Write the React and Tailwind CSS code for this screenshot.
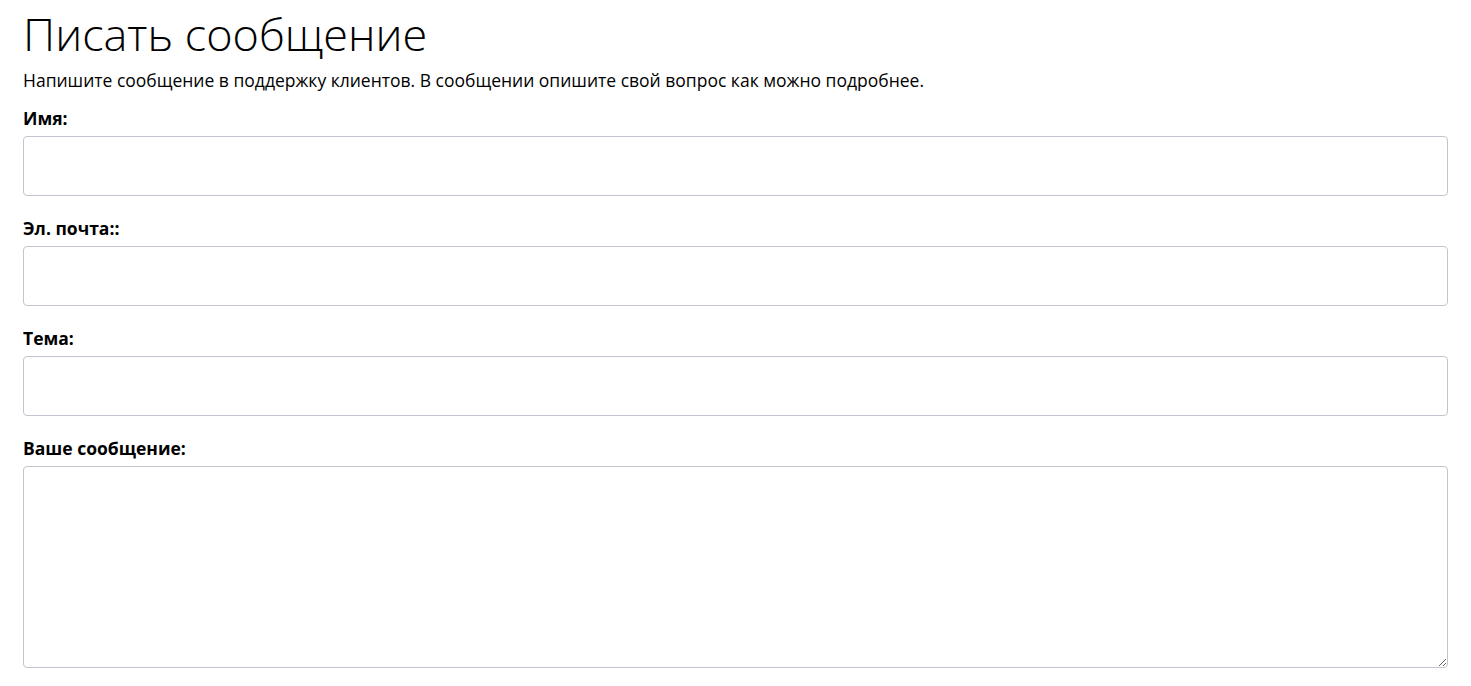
export default function App() {
  const fields = [
    { label: 'Имя:', type: 'text' },
    { label: 'Эл. почта::', type: 'email' },
    { label: 'Тема:', type: 'text' },
  ];

  return (
    <div
      className="min-h-screen bg-white px-[23px] pt-[6px] text-black"
      style={{ fontFamily: '"Open Sans", "Liberation Sans", sans-serif' }}
    >
      <h1 className="text-[45px] font-light leading-[56px]">Писать сообщение</h1>
      <p className="mt-[6px] text-[17.5px] leading-6">
        Напишите сообщение в поддержку клиентов. В сообщении опишите свой вопрос как можно подробнее.
      </p>
      <form className="mt-[14px] flex flex-col gap-5">
        {fields.map((f) => (
          <div key={f.label} className="flex flex-col gap-[6px]">
            <label className="text-[17.5px] font-bold leading-6">{f.label}</label>
            <input
              type={f.type}
              className="h-[60px] w-full rounded border border-[#c4c4cf] bg-white px-3 outline-none"
            />
          </div>
        ))}
        <div className="flex flex-col gap-[6px]">
          <label className="text-[17.5px] font-bold leading-6">Ваше сообщение:</label>
          <textarea className="block h-[202px] w-full rounded border border-[#c4c4cf] bg-white px-3 py-2 outline-none" />
        </div>
      </form>
    </div>
  );
}
